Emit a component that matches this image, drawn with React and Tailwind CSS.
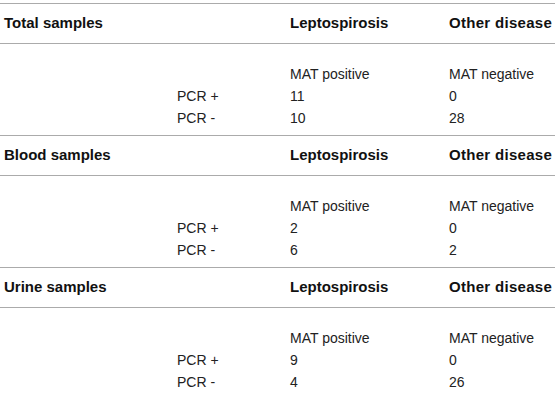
import React from "react";

const sections = [
  { title: "Total samples", plus: ["11", "0"], minus: ["10", "28"] },
  { title: "Blood samples", plus: ["2", "0"], minus: ["6", "2"] },
  { title: "Urine samples", plus: ["9", "0"], minus: ["4", "26"] },
];

function Row({ a, b, c, d }) {
  return (
    <div className="grid grid-cols-[173px_113px_159px_1fr] h-[22px] items-center">
      <div>{a}</div>
      <div>{b}</div>
      <div>{c}</div>
      <div>{d}</div>
    </div>
  );
}

export default function App() {
  return (
    <div
      className="w-[559px] h-[412px] overflow-hidden bg-white text-[#222] pt-[3px]"
      style={{ fontFamily: '"Liberation Sans", Arial, sans-serif' }}
    >
      <div className="w-[555px]">
        {sections.map((s, i) => (
          <div key={i} className="border-t border-[#ababab]">
            <div className="grid grid-cols-[286px_159px_1fr] h-[40px] items-center border-b border-[#ababab] pl-[4px] text-[15px] font-bold text-[#111] whitespace-nowrap">
              <div>{s.title}</div>
              <div>Leptospirosis</div>
              <div className="tracking-[0.3px]">Other disease</div>
            </div>
            <div className="pl-[4px] pt-[19px] pb-[6px] text-[14px] whitespace-nowrap">
              <Row a="" b="" c="MAT positive" d="MAT negative" />
              <Row a="" b="PCR +" c={s.plus[0]} d={s.plus[1]} />
              <Row a="" b="PCR -" c={s.minus[0]} d={s.minus[1]} />
            </div>
          </div>
        ))}
      </div>
    </div>
  );
}
